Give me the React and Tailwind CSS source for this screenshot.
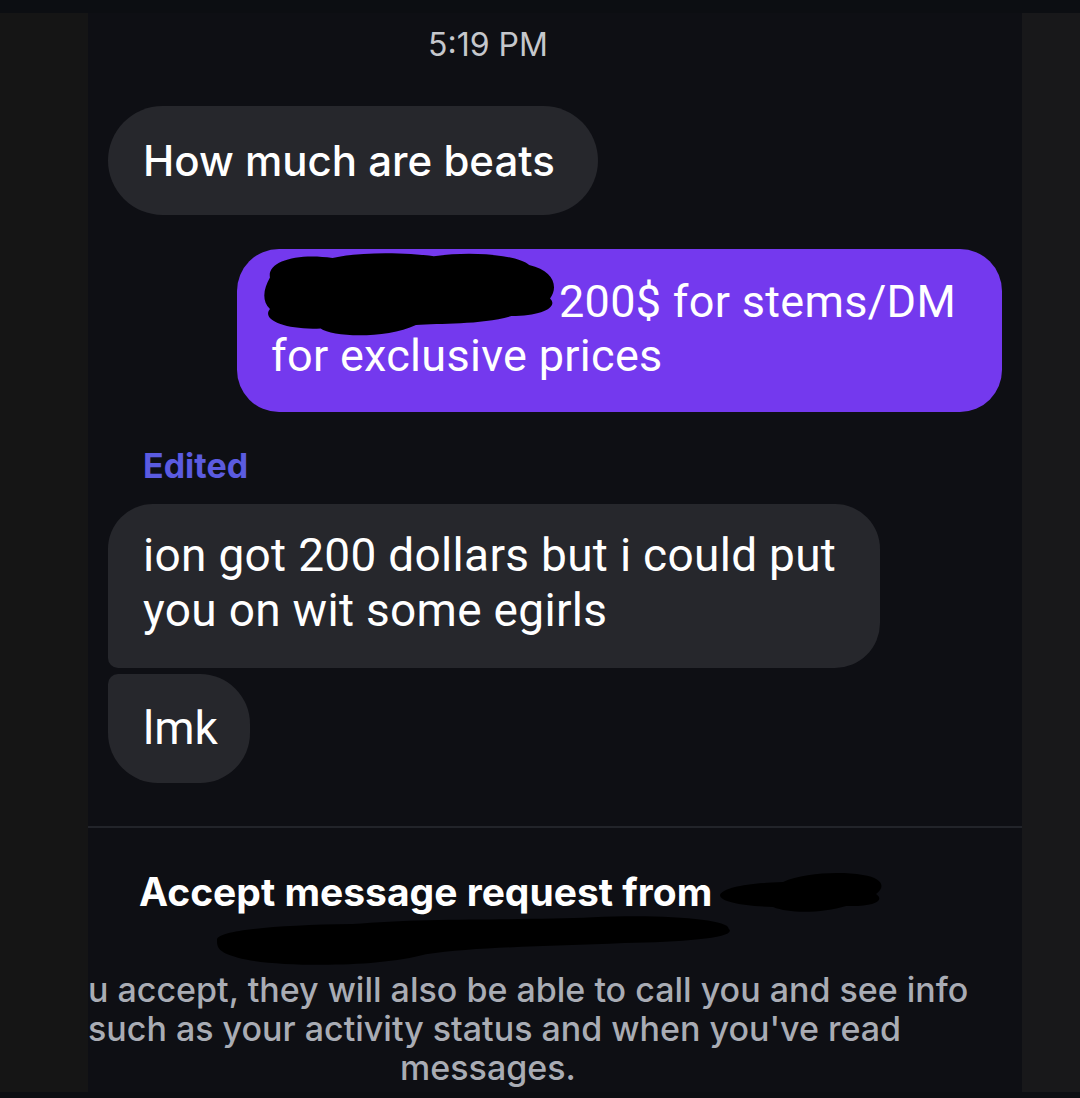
import React from 'react';

const sans = { fontFamily: 'Inter, "Liberation Sans", sans-serif' };
const narrow = { fontFamily: 'Roboto, "Liberation Sans", sans-serif' };

function Scribble({ className, d }) {
  return (
    <svg className={`absolute ${className}`} viewBox="0 0 100 100" preserveAspectRatio="none">
      <path d={d} fill="#000" />
    </svg>
  );
}

function Bubble({ children, className = '' }) {
  return (
    <div className={`bg-[#26272c] text-white ${className}`} style={narrow}>
      {children}
    </div>
  );
}

export default function App() {
  return (
    <div className="w-[1080px] h-[1098px] bg-[#0c0e12] flex flex-col overflow-hidden">
      <div className="h-[13px] shrink-0" />
      <div className="flex flex-1 min-h-0">
        <div className="w-[88px] shrink-0 bg-[#151515]" />

        <main className="flex-1 bg-[#0e0f14] overflow-hidden flex flex-col">
          {/* timestamp */}
          <div className="w-[800px] text-center pt-[14px] text-[32px] leading-[36px] text-[#c5c7cc]" style={sans}>
            5:19 PM
          </div>

          <div className="px-5 pt-[43px] flex flex-col">
            <Bubble className="self-start w-[490px] h-[109px] rounded-[55px] pl-[35px] flex items-center">
              <span className="text-[42px] font-medium" style={sans}>How much are beats</span>
            </Bubble>

            <div className="self-end mt-[34px] w-[765px] h-[163px] rounded-[42px] bg-[#7439ee] text-white pl-[34px] pt-[26px] relative" style={narrow}>
              <p className="text-[45px] leading-[54px] tracking-[0.3px]">
                <span className="inline-block w-[288px]" />200$ for stems/DM
                <br />for exclusive prices
              </p>
              <Scribble
                className="left-[24px] top-[2px] w-[298px] h-[88px]"
                d="M3 30 C2 12 12 2 24 8 C34 0 50 2 58 6 C70 0 86 4 90 16 C98 22 100 40 97 54 C100 64 94 74 84 74 C74 84 60 82 52 84 C42 100 24 98 20 88 C8 90 0 78 3 66 C0 56 1 42 3 30 Z"
              />
            </div>

            <div className="mt-[36px] pl-[35px] text-[34px] leading-[36px] font-bold text-[#5b5be0]" style={sans}>
              Edited
            </div>

            <Bubble className="self-start mt-[20px] w-[772px] h-[164px] rounded-[45px] rounded-bl-[10px] pl-[35px] pt-[24px]">
              <p className="text-[46px] leading-[55px] tracking-[0.3px]">
                ion got 200 dollars but i could put
                <br />you on wit some egirls
              </p>
            </Bubble>

            <Bubble className="self-start mt-[6px] w-[142px] h-[109px] rounded-[50px] rounded-tl-[10px] pl-[35px] flex items-center">
              <span className="text-[46px]">lmk</span>
            </Bubble>
          </div>

          <div className="mt-[43px] h-[2px] bg-[#22242a]" />

          {/* message request footer */}
          <div className="relative pl-[51px] pt-[42px]">
            <h2 className="text-[39px] leading-[44px] font-bold text-white" style={sans}>
              Accept message request from
            </h2>
            <Scribble
              className="left-[632px] top-[42px] w-[166px] h-[50px]"
              d="M0 50 C2 34 18 26 38 24 C50 6 72 2 86 10 C98 16 100 34 94 48 C100 62 92 74 76 72 C62 86 42 88 32 74 C14 72 0 64 0 50 Z"
            />
            <Scribble
              className="left-[129px] top-[86px] w-[522px] h-[56px]"
              d="M0 46 C0 30 10 20 26 18 C40 6 60 12 72 6 C86 0 98 10 98 26 C100 42 90 50 78 52 C64 58 50 58 40 72 C30 98 10 94 4 78 C0 68 0 58 0 46 Z"
            />
          </div>

          <div className="mt-[56px] text-[34px] leading-[39px] font-medium text-[#a9acb4]" style={sans}>
            <p className="whitespace-nowrap">u accept, they will also be able to call you and see info</p>
            <p className="whitespace-nowrap">such as your activity status and when you've read</p>
            <p className="w-[800px] text-center">messages.</p>
          </div>
        </main>

        <div className="w-[58px] shrink-0 bg-[#18181a]" />
      </div>
      <div className="h-[6px] shrink-0" />
    </div>
  );
}
